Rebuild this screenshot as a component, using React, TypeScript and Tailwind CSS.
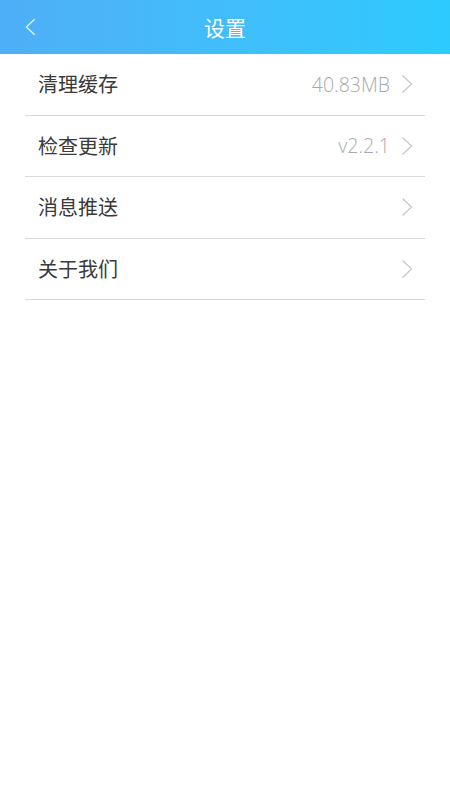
const items = [
  { id: "cache", label: "清理缓存", value: "40.83MB" },
  { id: "update", label: "检查更新", value: "v2.2.1" },
  { id: "push", label: "消息推送", value: "" },
  { id: "about", label: "关于我们", value: "" },
]

function Chevron({ className }: { className?: string }) {
  return (
    <svg viewBox="0 0 12 20" className={className} fill="none" stroke="currentColor" strokeWidth="1.3">
      <path d="M1.5 1.5 L10.5 10 L1.5 18.5" />
    </svg>
  )
}

export default function App() {
  return (
    <div className="w-[450px] h-[800px] bg-white" style={{ fontFamily: '"Noto Sans CJK SC", "Noto Sans", sans-serif' }}>
      <header className="relative h-[54px] flex items-center justify-center bg-gradient-to-r from-[#4eaff7] to-[#2ccbfe]">
        <svg viewBox="0 0 12 20" className="absolute left-[25px] top-[17px] w-[11px] h-[20px] text-[#e6f5ff]" fill="none" stroke="currentColor" strokeWidth="1.3">
          <path d="M10.5 1.5 L1.5 10 L10.5 18.5" />
        </svg>
        <h1 className="text-white text-[21px] leading-none">设置</h1>
      </header>
      <div className="mx-[25px]">
        {items.map((item) => (
          <div key={item.id} className="h-[61.5px] flex items-center border-b border-[#d9d9d9] pl-[13px] pr-[12px]">
            <span className="text-[20px] text-[#3a3a3a] flex-1">{item.label}</span>
            {item.value && (
              <span className="text-[19.5px] text-[#aaaaaa] mr-[11px]" style={{ fontFamily: '"Open Sans", "Noto Sans", sans-serif', fontWeight: 300 }}>
                {item.value}
              </span>
            )}
            <Chevron className="w-[12px] h-[20px] text-[#c8c8c8]" />
          </div>
        ))}
      </div>
    </div>
  )
}
